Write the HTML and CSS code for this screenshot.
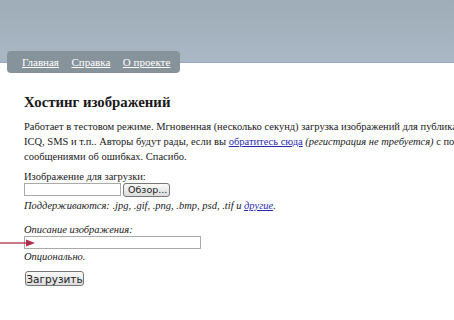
FILE: index.html
```html
<!DOCTYPE html>
<html lang="ru">
<head>
<meta charset="utf-8">
<link rel="stylesheet" href="styles.css">
</head>
<body>
<header class="top">
  <nav class="tabs">
    <a href="#">Главная</a>
    <a href="#">Справка</a>
    <a href="#">О проекте</a>
  </nav>
</header>
<main class="content">
  <h1 class="title">Хостинг изображений</h1>
  <p class="intro">Работает в тестовом режиме. Мгновенная (несколько секунд) загрузка изображений для публикации в блогах,<br>ICQ, SMS и т.п.. Авторы будут рады, если вы <a href="#">обратитесь сюда</a> <i>(регистрация не требуется)</i> с пожеланиями и<br>сообщениями об ошибках. Спасибо.</p>
  <form class="form">
    <div class="field">
      <div class="label">Изображение для загрузки:</div>
      <div class="filerow">
        <span class="box box-file"></span>
        <span class="btn">Обзор...</span>
      </div>
      <div class="hint">Поддерживаются: .jpg, .gif, .png, .bmp, psd, .tif и <a href="#">другие</a>.</div>
    </div>
    <div class="field field-last">
      <div class="label ital">Описание изображения:</div>
      <div class="descrow">
        <span class="box box-desc"></span>
        <svg class="arrow" width="36" height="10" viewBox="0 0 36 10"><line x1="0" y1="5" x2="28" y2="5" stroke="#b0304a" stroke-width="1.3"/><polygon points="26,1.5 35,5 26,8.5" fill="#b0304a"/></svg>
      </div>
      <div class="hint">Опционально.</div>
    </div>
    <div class="submit"><span class="btn">Загрузить</span></div>
  </form>
</main>
</body>
</html>
```
FILE: styles.css
```css
html, body {
  margin: 0;
  padding: 0;
  background: #fff;
  overflow: hidden;
}
body {
  width: 454px;
  height: 320px;
  font-family: "Liberation Serif", "Times New Roman", serif;
  font-size: 10.5px;
  color: #1a1a1a;
}
.top {
  height: 62px;
  background: linear-gradient(#9fadb8, #aab8c6);
  border-bottom: 1px solid #9aa6c4;
  position: relative;
}
.tabs {
  position: absolute;
  left: 7px;
  top: 51px;
  width: 173px;
  height: 22px;
  box-sizing: border-box;
  background: #87939b;
  border-radius: 4px;
  padding: 5px 0 0 15px;
  display: flex;
  gap: 12.5px;
  font-size: 11px;
}
.tabs a {
  color: #fff;
  line-height: 13px;
}
.content {
  padding: 0 0 0 24px;
  white-space: nowrap;
}
.title {
  margin: 31px 0 0;
  font-size: 14.8px;
  line-height: 17px;
  font-weight: bold;
}
.intro {
  margin: 8px 0 0;
  line-height: 15px;
}
a { color: #2a2ab0; }
.form { margin-top: 6px; }
.field { margin-bottom: 11px; }
.field-last { margin-bottom: 8px; }
.label { line-height: 13px; }
.ital, .hint { font-style: italic; }
.filerow, .descrow {
  display: flex;
  align-items: center;
  gap: 2px;
  height: 13px;
  position: relative;
}
.box {
  display: inline-block;
  height: 13px;
  border: 1px solid #aaa;
  box-sizing: border-box;
  background: #fff;
}
.box-file { width: 97px; }
.box-desc { width: 177px; }
.btn {
  display: inline-block;
  font-family: "DejaVu Sans", sans-serif;
  font-size: 9.5px;
  line-height: 12px;
  padding: 0 4px;
  border: 1px solid #777;
  border-radius: 3px;
  background: linear-gradient(#fafafa, #dcdcdc);
  color: #222;
}
.filerow .btn { width: 47px; height: 14px; box-sizing: border-box; text-align: center; }
.hint { line-height: 13px; margin-top: 3px; }
.field-last .hint { margin-top: 1px; }
.arrow {
  position: absolute;
  left: -24px;
  top: 2px;
}
.submit .btn {
  margin-left: 1px;
  width: 59px;
  height: 15px;
  box-sizing: border-box;
  text-align: center;
  padding: 1px 0 0;
  font-size: 10.5px;
}
```
